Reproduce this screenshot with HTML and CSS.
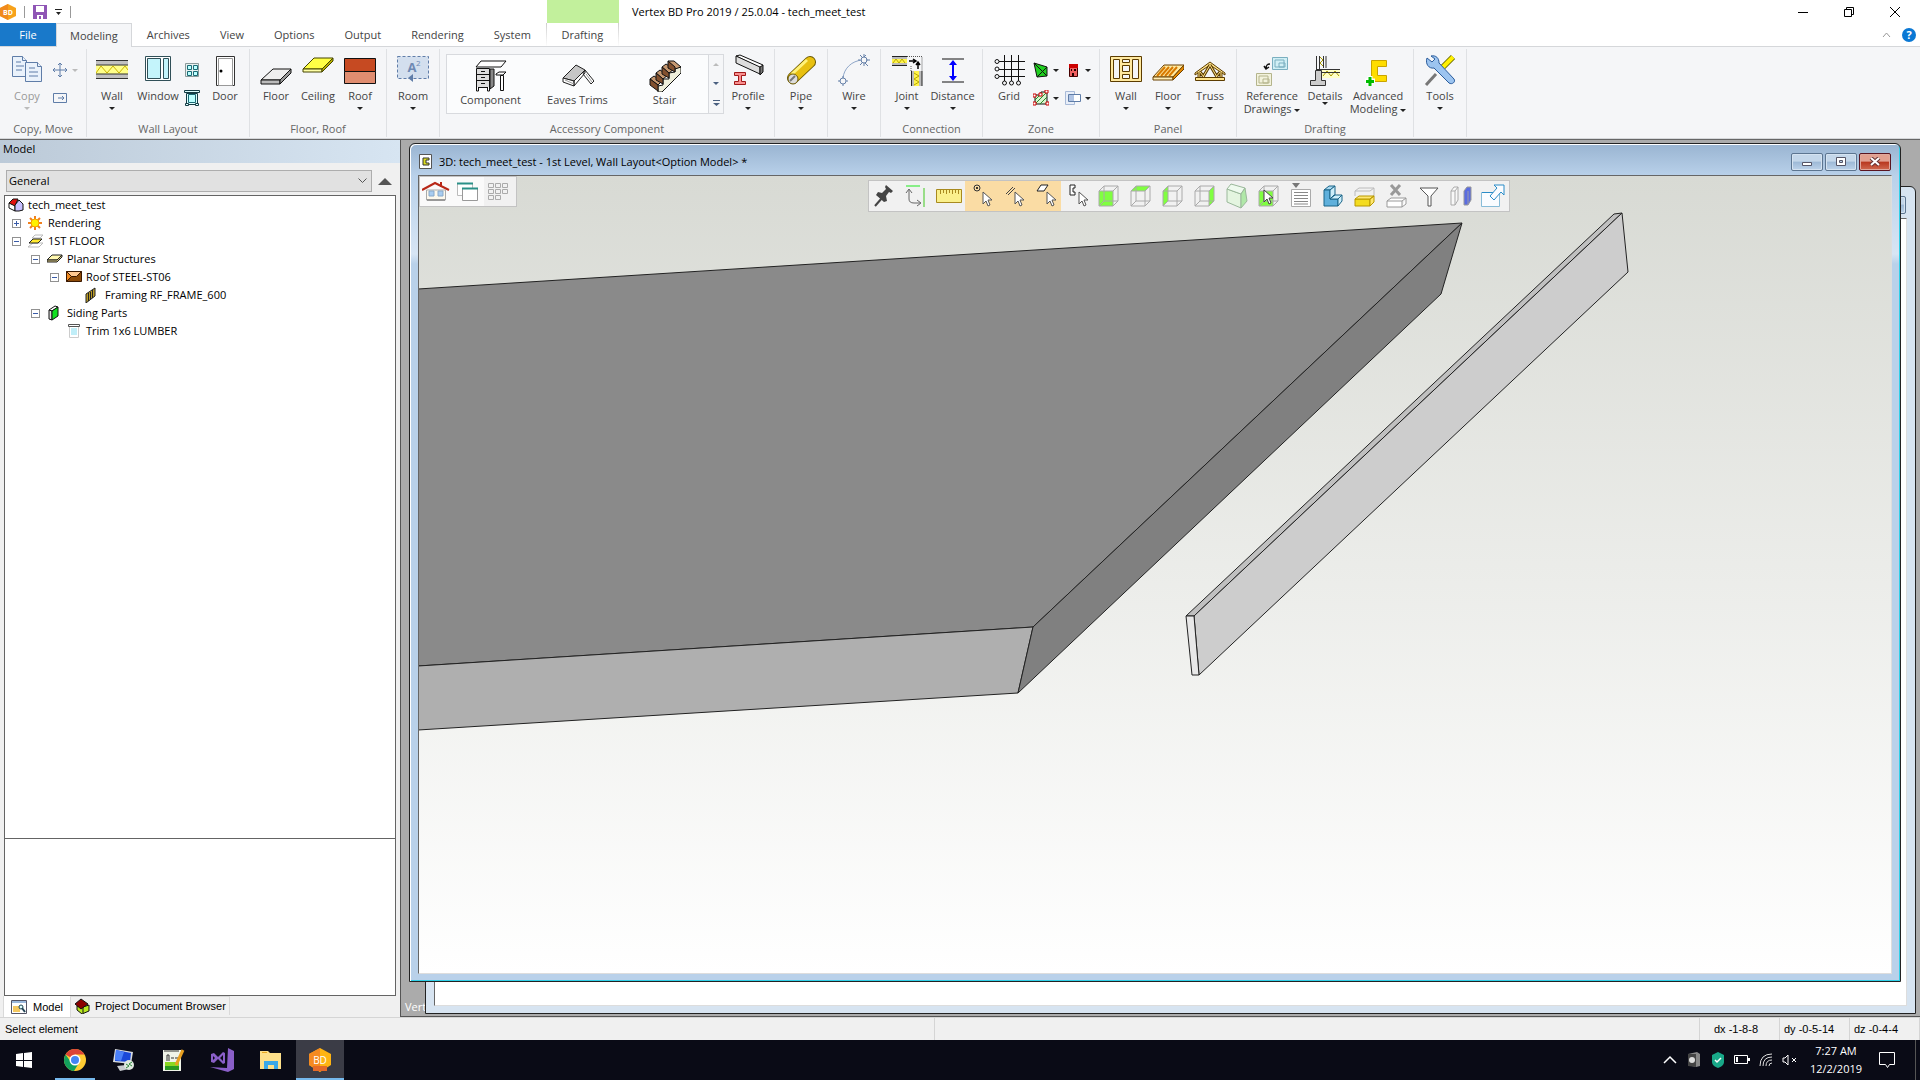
FILE: index.html
```html
<!DOCTYPE html>
<html lang="en">
<head>
    <meta charset="UTF-8">
    <meta name="viewport" content="width=device-width, initial-scale=1.0">
    <title>Vertex BD Pro 2019 / 25.0.04 - tech_meet_test</title>
    <link rel="stylesheet" href="styles.css">
</head>
<body>
    <header class="titlebar">
        <div class="quick-access">
            <svg width="16" height="18" viewBox="0 0 16 18"><path d="M8 1l8 4v8l-8 4-8-4V5z" fill="#f7a21b"/><path d="M0 5l8-4v16l-8-4z" fill="#f08a1d"/><text x="8" y="12" text-anchor="middle" class="logo-small">BD</text></svg>
            <span class="qa-line"></span>
            <button aria-label="Save"><svg width="14" height="14" viewBox="0 0 14 14"><path d="M0 0h14v14H0z" fill="#8f55b5"/><path d="M3 1h8v6H3zM4 10h6v4H4z" fill="#fff"/><path d="M6 11h2v3H6z" fill="#8f55b5"/></svg></button>
            <button aria-label="Customize"><svg width="7" height="6" viewBox="0 0 7 6"><path d="M0 0h7v1H0zM1 3h5L3.500 6z" fill="#222"/></svg></button>
            <span class="qa-line"></span>
        </div>
        <div class="context-tab"></div>
        <h1>Vertex BD Pro 2019 / 25.0.04 - tech_meet_test</h1>
        <div class="app-buttons">
            <button aria-label="Minimize"><svg width="10" height="10"><path d="M0 5.500h10" stroke="#000"/></svg></button>
            <button aria-label="Restore"><svg width="10" height="10" fill="none" stroke="#000"><path d="M.5 2.500h7v7h-7zM2.500 2.500v-2h7v7h-2"/></svg></button>
            <button aria-label="Close"><svg width="10" height="10"><path d="M0 0l10 10M10 0L0 10" stroke="#000"/></svg></button>
        </div>
    </header>

    <nav class="tabs">
        <button class="tab tab-file">File</button>
        <button class="tab tab-active">Modeling</button>
        <button class="tab">Archives</button>
        <button class="tab">View</button>
        <button class="tab">Options</button>
        <button class="tab">Output</button>
        <button class="tab">Rendering</button>
        <button class="tab">System</button>
        <button class="tab tab-context">Drafting</button>
        <div class="tabs-right">
            <button aria-label="Collapse ribbon"><svg width="9" height="6"><path d="M1 5l3.500-4L8 5" fill="none" stroke="#999"/></svg></button>
            <button class="help" aria-label="Help">?</button>
        </div>
    </nav>

    <section class="ribbon">
        <div class="group">
            <div class="group-body">
                <button class="tool tool-44 tool-off">
                    <svg class="icon" viewBox="0 0 32 32" fill="#eaf2fb" stroke="#5f7da8"><path d="M1.500 2.500h10l4 4v16h-14z"/><path d="M11.500 2.500v4h4M5 8h5M5 12h8M5 16h6" /><path d="M14.500 8.500h12l4 4v15h-16z"/><path d="M26.500 8.500v4h4M18 14h6M18 18h9M18 22h9"/></svg>
                    <span>Copy</span><i class="caret"></i>
                </button>
                <div class="small-stack">
                    <button aria-label="Move"><svg width="16" height="16" fill="none" stroke="#5f7da8"><path d="M8 1v14M1 8h14M6 3l2-2 2 2M6 13l2 2 2-2M3 6L1 8l2 2M13 6l2 2-2 2"/></svg><i class="caret caret-off"></i></button>
                    <button aria-label="Stretch"><svg width="16" height="16" fill="none" stroke="#5f7da8"><path d="M9 3.500H1.500v9H9M9 3.500h5.500v9H9M6 8h6M10 6l2 2-2 2"/></svg></button>
                </div>
            </div>
            <h2>Copy, Move</h2>
        </div>

        <div class="group group-tight">
            <div class="group-body">
                <button class="tool tool-46">
                    <svg class="icon" viewBox="0 0 32 32"><path d="M0 7h32v4H0zM0 20h32v4H0z" fill="#c0c0c0"/><path d="M0 11h32v9H0z" fill="#ffff8a"/><path d="M0 6.500h32M0 11h32M0 20h32M0 24.500h32" stroke="#333"/><path d="M0 19l5-7 6 7 6-7 6 7 6-7 3 4" fill="none" stroke="#c9b300"/></svg>
                    <span>Wall</span><i class="caret"></i>
                </button>
                <button class="tool tool-46">
                    <svg class="icon" viewBox="0 0 32 32"><path d="M3.500 2.500h25v24h-25z" fill="#fff" stroke="#305058"/><path d="M5.500 4.500h13v20h-13zM21.500 4.500h5v20h-5z" fill="#c4f4fb" stroke="#305058"/></svg>
                    <span>Window</span>
                </button>
                <div class="small-stack">
                    <button aria-label="Opening"><svg width="16" height="16"><path d="M1.500 1.500h13v13h-13z" fill="#e8f0f0" stroke="#8a9a9a"/><path d="M3.500 3.500h4v4h-4zM9.500 3.500h4v4h-4zM3.500 9.500h4v4h-4zM9.500 9.500h4v4h-4z" fill="#bff" stroke="#1a6a74"/></svg></button>
                    <button aria-label="Window trim"><svg width="16" height="16"><path d="M2.500 3.500h11v11h-11z" fill="#dff" stroke="#143c44"/><path d="M.5.5h15v2H.5zM1.500 13.500h3v2h-3zM11.500 13.500h3v2h-3z" fill="#dff" stroke="#143c44"/><path d="M4.500 4.500h7v8h-7z" fill="#bff" stroke="#1a6a74"/></svg></button>
                </div>
                <button class="tool tool-44">
                    <svg class="icon" viewBox="0 0 32 32"><path d="M7.500 2.500h18v29h-18z" fill="#fff" stroke="#333"/><path d="M9.500 4.500h14v27h-14z" fill="#fff" stroke="#999"/><circle cx="12" cy="17" r="1.500"/></svg>
                    <span>Door</span>
                </button>
            </div>
            <h2>Wall Layout</h2>
        </div>

        <div class="group">
            <div class="group-body">
                <button class="tool">
                    <svg class="icon" viewBox="0 0 32 32" stroke="#111" stroke-linejoin="round"><path d="M1 26l12-11h18L20 26z" fill="#eee"/><path d="M1 26h19v4H1z" fill="#bbb"/><path d="M20 26l11-11v4L20 30z" fill="#999"/></svg>
                    <span>Floor</span>
                </button>
                <button class="tool">
                    <svg class="icon" viewBox="0 0 32 32" stroke="#444400"><path d="M1 15L12 4h19L20 15z" fill="#ffff45"/><path d="M1 15h19v3H1z" fill="#ffffa8"/><path d="M20 15L31 4v3L20 18z" fill="#b8b000"/></svg>
                    <span>Ceiling</span>
                </button>
                <button class="tool">
                    <svg class="icon" viewBox="0 0 32 32" stroke="#111"><path d="M.5 4.500h31v13H.5z" fill="#c64a22"/><path d="M.5 17.500h31v12H.5z" fill="#e08d70"/></svg>
                    <span>Roof</span><i class="caret"></i>
                </button>
            </div>
            <h2>Floor, Roof</h2>
        </div>

        <div class="group">
            <div class="group-body">
                <button class="tool">
                    <svg class="icon" viewBox="0 0 32 32"><path d="M.5 2.500h31v22H.5z" fill="#d3dfee" stroke="#5f7da8" stroke-dasharray="3 2"/><text x="15" y="18" text-anchor="middle" class="room-a">A</text><text x="19" y="12" class="room-2">2</text><path d="M11 24l5-4v8z" fill="#5f7da8"/></svg>
                    <span>Room</span><i class="caret"></i>
                </button>
            </div>
        </div>

        <div class="group">
            <div class="group-body">
                <div class="gallery">
                    <button class="tool tool-87">
                        <svg class="icon" viewBox="0 0 32 32" fill="#fff" stroke="#111"><path d="M1 7l5-6h25l-5 6z"/><path d="M1.500 8.500h13v19h-13z" fill="#ddd"/><path d="M1 14.500h14M1 20.500h14M6 11.500h4M6 17.500h4M6 23.500h4M1.500 27v4h2v-4M12.500 27v4h2v-4"/><path d="M15 9h4v17l-4 3z" fill="#888"/><path d="M21 14l3-2h7l-3 3h-7zM25.500 15.500h3v15h-3z"/></svg>
                        <span>Component</span>
                    </button>
                    <button class="tool tool-87">
                        <svg class="icon" viewBox="0 0 32 32" fill="#fff" stroke="#222"><path d="M1 18L14 5l9 5-11 11z" fill="#c6c6c6"/><path d="M1 18v4l11 4v-5zM12 21v5l11-13v-3zM23 10l9 11-3 3-8-10z"/><path d="M3 20l9 4M24 14l6 8" stroke="#999"/></svg>
                        <span>Eaves Trims</span>
                    </button>
                    <button class="tool tool-87">
                        <svg class="icon" viewBox="0 0 32 32" stroke="#111"><path d="M9 32V26l5-1v-6h6v-6l6-1V8l6-1v6L13 32z" fill="#efefdb"/><path d="M1 19l4-3 8 5-4 4zM7 13l4-3 8 5-5 4zM13 7l4-3 8 5-5 4zM19 1h6l7 6-6 2z" fill="#c69870"/><path d="M1 19l8 6v6l-8-6zM7 13l7 6v5l-7-4zM13 7l7 6v5l-7-4zM19 1l7 6v5l-7-4z" fill="#82502e"/></svg>
                        <span>Stair</span>
                    </button>
                    <div class="gallery-scroll">
                        <button aria-label="Scroll up"><i class="caret caret-up"></i></button>
                        <button aria-label="Scroll down"><i class="caret caret-blue"></i></button>
                        <button aria-label="More"><svg width="7" height="6"><path d="M0 0h7v1H0zM0 3h7L3.500 6z" fill="#4a6080"/></svg></button>
                    </div>
                </div>
                <button class="tool">
                    <svg class="icon" viewBox="0 0 32 32" stroke="#111"><path d="M4 2l4-1 23 10-3 3z" fill="#fff"/><path d="M4 2l24 11v7L4 9z" fill="#ddd"/><path d="M28 13l3-2v7l-3 3z" fill="#777"/><path d="M2.500 18.500h11v3h-4v6h4v3h-11v-3h4v-6h-4z" fill="#f98f8f" stroke="#a01818"/></svg>
                    <span>Profile</span><i class="caret"></i>
                </button>
            </div>
            <h2>Accessory Component</h2>
        </div>

        <div class="group">
            <div class="group-body">
                <button class="tool">
                    <svg class="icon" viewBox="0 0 32 32"><path d="M8 24L25 8" stroke="#6b5800" stroke-width="12" stroke-linecap="round"/><path d="M8 24L25 8" stroke="#e8c010" stroke-width="10" stroke-linecap="round"/><path d="M7 20L22 6" stroke="#fff27a" stroke-width="3"/><circle cx="8" cy="25" r="5" fill="#ddd" stroke="#6b5800"/><path d="M5 27l5-5" stroke="#777" stroke-width="2"/></svg>
                    <span>Pipe</span><i class="caret"></i>
                </button>
            </div>
        </div>

        <div class="group">
            <div class="group-body">
                <button class="tool">
                    <svg class="icon" viewBox="0 0 32 32" fill="none" stroke="#6580a8"><path d="M5 24C6 14 14 7 24 6" stroke="#8ea6c8"/><circle cx="5" cy="27" r="3"/><path d="M0 27h2M8 27h2M5 22v2M5 30v2M22 6h-2M28 6h4M28 1l-2 2M24 9l-2 2M27 9l3 3M22 1l3 3M26 0v3M26 9v3"/><circle cx="26" cy="6" r="3"/></svg>
                    <span>Wire</span><i class="caret"></i>
                </button>
            </div>
        </div>

        <div class="group">
            <div class="group-body">
                <button class="tool">
                    <svg class="icon" viewBox="0 0 32 32"><path d="M1 3h15v8H1zM20 17h11v15H20z" fill="#bbb"/><path d="M1 5h15v4H1zM23 17h5v15h-5z" fill="#fff44c"/><path d="M1 2.500h15M1 11.500h15M20.500 17v15M31 17v15" stroke="#222"/><path d="M2 9l3-4 3 4 3-4 3 4M23 19l5 3-5 3 5 3-5 3" fill="none" stroke="#b8a800"/><path d="M16 2.500h15V17M20 12v5" stroke="#555" fill="none" stroke-dasharray="1 1"/><path d="M18 7h6M22 5l3 2-3 2M27 15V9M25 11l2-3 2 3" fill="none" stroke="#000" stroke-width="1.500"/></svg>
                    <span>Joint</span><i class="caret"></i>
                </button>
                <button class="tool tool-49">
                    <svg class="icon" viewBox="0 0 32 32"><path d="M5 5h22M5 28h22" stroke="#111"/><path d="M16 8v17" stroke="#00f" stroke-width="2"/><path d="M12 11l4-5 4 5zM12 22l4 5 4-5z" fill="#00f"/></svg>
                    <span>Distance</span><i class="caret"></i>
                </button>
            </div>
            <h2>Connection</h2>
        </div>

        <div class="group">
            <div class="group-body">
                <button class="tool">
                    <svg class="icon" viewBox="0 0 32 32" fill="none" stroke="#111"><path d="M6 7.500h26M6 15.500h26M6 22.500h26M11.500 1v26M18.500 1v26M25.500 1v26"/><circle cx="4" cy="7.500" r="2"/><circle cx="4" cy="15" r="2"/><circle cx="4" cy="22.500" r="2"/><circle cx="11.500" cy="29" r="2"/><circle cx="18.500" cy="29" r="2"/><circle cx="25.500" cy="29" r="2"/></svg>
                    <span>Grid</span>
                </button>
                <div class="small-stack">
                    <button aria-label="Zone"><svg width="16" height="16" stroke="#111"><path d="M1 1l13 4v9l-10 1z" fill="#1fd01f"/><path d="M1 1l13 13M4 15l10-10"/></svg><i class="caret"></i></button>
                    <button aria-label="Zone area"><svg width="16" height="16"><path d="M2 5h5l1-3h6v12H2z" fill="#d8f5d0" stroke="#111"/><path d="M2 10l5-5M2 14l12-12M7 14l7-7" stroke="#2a8a2a"/><path d="M0 4h3v3H0zM6 3h3v3H6zM12 0h3v3h-3zM0 12h3v3H0zM13 12h3v3h-3z" fill="#fff" stroke="#c00"/></svg><i class="caret"></i></button>
                </div>
                <div class="small-stack">
                    <button aria-label="House"><svg width="16" height="16"><path d="M4.500 2.500h8v12h-8z" fill="#f06060" stroke="#400"/><path d="M4 2h9v4H4z" fill="#c00"/><path d="M6 7h1v2H6zM9 7h2v2H9zM7 11h2v3H7z" fill="#200"/></svg><i class="caret"></i></button>
                    <button aria-label="Overlap"><svg width="16" height="16"><path d="M.5 1.500h9v13h-9z" fill="#e8eef8" stroke="#a8bad8"/><path d="M3.500 4.500h12v7h-12z" fill="#fff" stroke="#5f7da8"/><path d="M4 5h5v6H4z" fill="#b0c4e4"/></svg><i class="caret"></i></button>
                </div>
            </div>
            <h2>Zone</h2>
        </div>

        <div class="group">
            <div class="group-body">
                <button class="tool">
                    <svg class="icon" viewBox="0 0 32 32" fill="#ffe9a0" stroke="#5c3c00"><path d="M.5 2.500h31v25H.5zM3.500 5.500v19h6v-19zM12.500 5.500v3h7v-3zM12.500 11.500v6h7v-6zM12.500 20.500v4h7v-4zM22.500 5.500v19h6v-19z" fill-rule="evenodd"/></svg>
                    <span>Wall</span><i class="caret"></i>
                </button>
                <button class="tool">
                    <svg class="icon" viewBox="0 0 32 32" stroke="#6a4000"><path d="M1 23L12 11h20L21 23z" fill="#ffe9a0"/><path d="M5 22l8-9M9 22l8-9M13 22l8-9M17 22l8-9" stroke="#d87a00" stroke-width="2"/><path d="M1 23h20v3H1z" fill="#fff0b8"/><path d="M21 23l11-12v4L21 26z" fill="#e88a00"/></svg>
                    <span>Floor</span><i class="caret"></i>
                </button>
                <button class="tool">
                    <svg class="icon" viewBox="0 0 32 32" fill="none"><path d="M1 19L16 8l15 11v2L16 11 1 21zM1.500 23.500h29v3h-29z" fill="#ffe48a" stroke="#5c3c00"/><path d="M16 11L9 23M16 11l7 12M5 18v5M27 18v5M6 18l4 5M26 18l-4 5" stroke="#5c3c00" stroke-width="3"/><path d="M16 11L9 23M16 11l7 12M5 18v5M27 18v5M6 18l4 5M26 18l-4 5" stroke="#ffe48a"/></svg>
                    <span>Truss</span><i class="caret"></i>
                </button>
            </div>
            <h2>Panel</h2>
        </div>

        <div class="group">
            <div class="group-body">
                <button class="tool tool-60">
                    <svg class="icon" viewBox="0 0 32 32"><path d="M16.500 3.500h15v12h-15z" fill="#d0eff5" stroke="#7aafc0"/><path d="M19 6h9v7h-9zM23 9h6v4h-6z" fill="none" stroke="#7aafc0"/><path d="M.5 19.500h15v12H.5z" fill="#f2f2dc" stroke="#b4b48c"/><path d="M3 22h9v7H3zM7 25h6v4H7z" fill="none" stroke="#b4b48c"/><path d="M14 10c-3 0-4 1-4 5M8 12l2 3 3-2" fill="none" stroke="#111" stroke-width="1.500"/></svg>
                    <span>Reference<br>Drawings <i class="caret"></i></span>
                </button>
                <button class="tool tool-46">
                    <svg class="icon" viewBox="0 0 32 32"><path d="M9 16h22v8H13v-5H9z" fill="#ffffc8"/><path d="M14 22l4-5 4 5 4-5 4 5" fill="none" stroke="#a89800"/><path d="M7.500 2v14M10.500 2v14M14.500 2v12M17 2v12M7 15.500h24M13 18.500h18" stroke="#333"/><path d="M11 3l3 3-3 3 3 3" fill="none" stroke="#a89800"/><path d="M6.500 16.500h6v10h4v5H1.500v-5h5z" fill="#ccc" stroke="#333"/></svg>
                    <span>Details</span><i class="caret caret-near"></i>
                </button>
                <button class="tool tool-60">
                    <svg class="icon" viewBox="0 0 32 32"><path d="M9.500 6.500h15v6h-9v9h9v6h-15z" fill="#fd0" stroke="#c9a400"/><path d="M8 22v10M3 27h10" stroke="#fff" stroke-width="5"/><path d="M8 23v9M4 27.500h8" stroke="#0b0" stroke-width="3"/></svg>
                    <span>Advanced<br>Modeling <i class="caret"></i></span>
                </button>
            </div>
            <h2>Drafting</h2>
        </div>

        <div class="group">
            <div class="group-body">
                <button class="tool">
                    <svg class="icon" viewBox="0 0 32 32"><path d="M2 31l10-11" stroke="#777" stroke-width="3"/><path d="M19 13L29 3" stroke="#6a6a00" stroke-width="6"/><path d="M19 13L29 3" stroke="#fff000" stroke-width="4"/><path d="M3 4l5 4 3-3-4-3c5-1 8 2 8 7l15 16c2 3-2 6-5 4L10 14c-5 1-9-4-7-10z" fill="#9cc4f0" stroke="#2a5c9c"/></svg>
                    <span>Tools</span><i class="caret"></i>
                </button>
            </div>
        </div>
    </section>

    <main class="work">
        <aside class="side">
            <div class="side-title">Model</div>
            <div class="side-filter">
                <select aria-label="Filter"><option>General</option></select>
                <button aria-label="Up" class="up"></button>
            </div>
            <div class="tree-box">
                <ul class="tree">
                    <li class="root"><svg width="16" height="16" stroke="#111"><path d="M1 6v5l6 3V8z" fill="#fff"/><path d="M1 6l4-4h5L7 9z" fill="#e01010"/><path d="M7 8l4-5 4 4v6l-4 1H7z" fill="#c8c0ff"/></svg>tech_meet_test</li>
                    <li class="level-1"><button class="expander plus" aria-label="Expand"></button><svg width="16" height="16"><path d="M7 1v14M0 8h14M2 3l10 10M12 3L2 13" stroke="#f08020" stroke-width="2"/><circle cx="7" cy="8" r="4" fill="#fff200" stroke="#f6a000"/></svg>Rendering</li>
                    <li class="level-1"><button class="expander" aria-label="Collapse"></button><svg width="16" height="16"><path d="M0 14l5-4h10l-4 4zM4 5l3-3h8l-3 3z" fill="#fff" stroke="#bbb"/><path d="M1 10l4-4h9l-4 4z" fill="#ffe92e" stroke="#222"/></svg>1ST FLOOR</li>
                    <li class="level-2"><button class="expander" aria-label="Collapse"></button><svg width="16" height="16" stroke="#222"><path d="M0 9l5-5h10l-5 5z" fill="#fff8b0"/><path d="M0 9v2h10l5-5V4l-5 5z" fill="#d8c880"/></svg>Planar Structures</li>
                    <li class="level-3"><button class="expander" aria-label="Collapse"></button><svg width="16" height="16" stroke="#3a1800"><path d="M.5 2.500h15v10H.5z" fill="#8c4a08"/><path d="M.5 2.500h15l-5 5h-5z" fill="#ffc890"/><path d="M.5 2.500l5 5-5 5z" fill="#f08a20"/></svg>Roof STEEL-ST06</li>
                    <li class="level-4"><svg width="16" height="16" stroke="#222"><path d="M1 7l9-6v8l-9 7z" fill="#b89a28"/><path d="M3.500 6v8M5.500 5v8M7.500 3v8"/></svg>Framing RF_FRAME_600</li>
                    <li class="level-2"><button class="expander" aria-label="Collapse"></button><svg width="16" height="16" stroke="#111"><path d="M2 5l6-4 3 1-6 4z" fill="#fff"/><path d="M2 5v9l3 1V6z" fill="#ddd"/><path d="M5 6l6-4v9l-6 4z" fill="#10e020"/></svg>Siding Parts</li>
                    <li class="leaf"><svg width="16" height="16"><path d="M3.500 3.500h9v11h-9z" fill="#fff" stroke="#ccc"/><path d="M5 5h6v7H5z" fill="#c0eef8"/><path d="M2.500 1.500h11v2h-11z" fill="#fff" stroke="#555"/></svg>Trim 1x6 LUMBER</li>
                </ul>
                <div class="tree-info"></div>
            </div>
            <div class="side-tabs">
                <button class="side-tab side-tab-active"><svg width="16" height="14"><path d="M.5.5h15v13H.5z" fill="#fff" stroke="#556"/><path d="M1 1h14v2H1z" fill="#9ab8dc"/><path d="M2 6h7v6H2z" fill="#f4c860"/><circle cx="10" cy="7" r="2" fill="#dff" stroke="#245"/><path d="M11 8l3 4" stroke="#245" stroke-width="2"/></svg>Model</button>
                <button class="side-tab"><svg width="16" height="16" stroke="#111"><path d="M3 8v4l5 4 7-3V7l-6 2z" fill="#b8e820"/><path d="M9 9v6" /><path d="M1 6l6-5 7 5-7 5z" fill="#8c0000"/></svg>Project Document Browser</button>
            </div>
        </aside>

        <section class="mdi">
            <span class="mdi-caption">Vertex</span>
            <div class="window window-back">
                <div class="window-title"><div class="window-buttons"><button aria-label="Close"></button></div></div>
                <div class="window-client"></div>
            </div>
            <div class="window window-front">
                <div class="window-title">
                    <svg width="14" height="15"><path d="M.5.5h12v14H.5z" fill="#fff" stroke="#555"/><path d="M4 4h6v2H7v3h3v2H4z" fill="#dede20" stroke="#333"/></svg>
                    <h3>3D: tech_meet_test - 1st Level, Wall Layout&lt;Option Model&gt; *</h3>
                    <div class="window-buttons">
                        <button aria-label="Minimize"><svg width="12" height="10"><path d="M1.500 5.500h9v3h-9z" fill="#fff" stroke="#556"/></svg></button>
                        <button aria-label="Maximize"><svg width="12" height="10"><path d="M1.500.5h9v8h-9zM4.500 3.500h3v2h-3z" fill="#fff" fill-rule="evenodd" stroke="#556"/></svg></button>
                        <button class="close" aria-label="Close"><svg width="12" height="10"><path d="M2 1l8 7M10 1L2 8" stroke="#633" stroke-width="4"/><path d="M2 1l8 7M10 1L2 8" stroke="#fff" stroke-width="2"/></svg></button>
                    </div>
                </div>
                <div class="window-client">
                    <!-- Roof slab and trim board -->
                    <svg class="scene" viewBox="0 0 1473 797" preserveAspectRatio="xMinYMin slice" stroke="#222" stroke-linejoin="round">
                        <path d="M-1 113L1043 47 614 451-1 490z" fill="#8a8a8a"/>
                        <path d="M-1 490L614 451 599 517-1 554z" fill="#afafaf"/>
                        <path d="M1043 47l-21 71L599 517l15-66z" fill="#808080"/>
                        <path d="M767 440L1195 38l8-1L775 440z" fill="#c0c0c0"/>
                        <path d="M775 440L1203 37l6 59L780 499z" fill="#cdcdcd"/>
                        <path d="M767 440h8l5 59h-7z" fill="#e8e8e8"/>
                    </svg>
                    <div class="view-tools">
                        <button aria-label="Home view"><svg width="28" height="22"><path d="M4.500 9h19v10h-19z" fill="#fdf8ec" stroke="#aaa"/><path d="M5 19h18" stroke="#999" stroke-width="2"/><path d="M0 9L13 2l14 7M19 1v5" fill="none" stroke="#b82818" stroke-width="2"/><path d="M7 10h5v5H7zM16 10h5v5h-5z" fill="#a8ccf0" stroke="#88a8c8"/></svg></button>
                        <button aria-label="Cascade"><svg width="22" height="20"><path d="M.5 1.500h15v12H.5z" fill="#fff" stroke="#bbb"/><path d="M0 1.500h16" stroke="#2a9088" stroke-width="2"/><path d="M5.500 6.500h15v12h-15z" fill="#fff" stroke="#999"/><path d="M5 6.500h16" stroke="#2a9088" stroke-width="2"/></svg></button>
                        <button class="flat" aria-label="Tile"><svg width="26" height="18" fill="none" stroke="#aaa"><path d="M1.500.5h5v4h-5zM8.500.5h5v4h-5zM15.500.5h5v4h-5zM1.500 6.500h5v4h-5zM8.500 6.500h5v4h-5zM15.500 6.500h5v4h-5zM1.500 12.500h5v4h-5zM8.500 12.500h5v4h-5z"/></svg></button>
                    </div>
                    <div class="pick-tools">
                        <button aria-label="Pin"><svg viewBox="0 0 26 26"><path d="M3 23l7-8" stroke="#444" stroke-width="2"/><path d="M14 2l7 6-2 2-2-1-3 4 1 5-3 1-8-7 2-3 4 1 4-4-1-2z" fill="#444"/></svg></button>
                        <button aria-label="Turn view"><svg viewBox="0 0 26 26" fill="none"><path d="M2 3h14" stroke="#8e8" stroke-width="2"/><path d="M20 5v19" stroke="#9d8" stroke-width="2"/><path d="M5 7v9q0 4 5 4h6M2 10l3-4 3 4M13 17l4 3-4 3" stroke="#666"/></svg></button>
                        <button aria-label="Measure"><svg viewBox="0 0 26 26"><path d="M.5 6.500h25v13H.5z" fill="#faf08c" stroke="#a88a20"/><path d="M4.500 7v4M7.500 7v3M10.500 7v4M13.500 7v3M16.500 7v4M19.500 7v3M22.500 7v4" stroke="#a88a20"/></svg></button>
                        <button class="on" aria-label="Pick point"><svg viewBox="-4 0 26 26"><circle cx="5" cy="5" r="3" fill="none" stroke="#333"/><circle cx="5" cy="5" r="1"/><path class="pointer" d="M11 9v12l3-3 2 5 2-1-2-5h4z"/></svg></button>
                        <button class="on" aria-label="Pick edge"><svg viewBox="-4 0 26 26"><path d="M2 11l7-7M4 12l7-7" stroke="#444"/><path class="pointer" d="M11 9v12l3-3 2 5 2-1-2-5h4z"/></svg></button>
                        <button class="on" aria-label="Pick face"><svg viewBox="-4 0 26 26"><path d="M1 8l4-6h7l-4 6z" fill="#fff" stroke="#222"/><path class="pointer" d="M11 9v12l3-3 2 5 2-1-2-5h4z"/></svg></button>
                        <button aria-label="Pick part"><svg viewBox="-4 0 26 26"><path d="M7 2H2v10h5V9H5V5h2z" fill="#fff" stroke="#222"/><path class="pointer" d="M11 9v12l3-3 2 5 2-1-2-5h4z"/></svg></button>
                        <button aria-label="Front face"><svg class="cube" viewBox="0 0 26 26"><path d="M3 8h14v15H3z" class="face"/><path d="M3 8h14v15H3zM3 8l5-5h14l-5 5M22 3v15l-5 5M8 3v15h14M3 23l5-5"/></svg></button>
                        <button aria-label="Top face"><svg class="cube" viewBox="0 0 26 26"><path d="M3 8l5-5h14l-5 5z" class="face"/><path d="M3 8h14v15H3zM3 8l5-5h14l-5 5M22 3v15l-5 5M8 3v15h14M3 23l5-5"/></svg></button>
                        <button aria-label="Left face"><svg class="cube" viewBox="0 0 26 26"><path d="M3 8l5-5v15l-5 5z" class="face"/><path d="M3 8h14v15H3zM3 8l5-5h14l-5 5M22 3v15l-5 5M8 3v15h14M3 23l5-5"/></svg></button>
                        <button aria-label="Right face"><svg class="cube" viewBox="0 0 26 26"><path d="M22 3v15l-5 5V8z" class="face"/><path d="M3 8h14v15H3zM3 8l5-5h14l-5 5M22 3v15l-5 5M8 3v15h14M3 23l5-5"/></svg></button>
                        <button aria-label="Isometric"><svg viewBox="0 0 26 26" stroke="#9ab89a"><path d="M3 6l14 5v14L3 19z" fill="#e4f5e0"/><path d="M3 6l4-5 14 4-4 6z" fill="#eefaee"/><path d="M17 11l4-6 2 13-6 7z" fill="#b0e8a8"/></svg></button>
                        <button aria-label="Pick plane"><svg class="cube" viewBox="0 0 26 26"><path d="M3 8h14v15H3z" class="face"/><path d="M3 8h14v15H3zM3 8l5-5h14l-5 5M22 3v15l-5 5M8 3v15h14M3 23l5-5"/><path class="pointer" d="M8 7v12l3-3 2 5 2-1-2-5h4z"/></svg></button>
                        <button aria-label="List"><svg viewBox="0 0 26 26"><path d="M4 0h8L8 5z" fill="#777"/><path d="M3.500 6.500h19v17h-19z" fill="#fff" stroke="#aaa"/><path d="M6 9.500h14M6 12.500h14M6 15.500h14M6 18.500h14M6 21h14" stroke="#888"/></svg></button>
                        <button aria-label="Part"><svg viewBox="0 0 26 26" stroke="#1a6488"><path d="M4 7l5-4h6l-5 4z" fill="#a8d8f0"/><path d="M4 7h6v9h8v7H4z" fill="#5fb0dc"/><path d="M10 16l4-4h8l-4 4zM10 7l5-4v9l-5 4zM18 16l4-4v6l-4 5z" fill="#cdeefa"/></svg></button>
                        <button aria-label="Section"><svg viewBox="0 0 26 26"><path d="M3 13V8l4-3h15v8l-4 3M3 8h15l4-3" fill="none" stroke="#bbb"/><path d="M3 16h15v7H3z" fill="#f4dc20" stroke="#b89800"/><path d="M3 16l4-3h15l-4 3zM18 16l4-3v6l-4 4z" fill="#ffe870" stroke="#b89800"/></svg></button>
                        <button aria-label="Hide"><svg viewBox="0 0 26 26"><path d="M7 2l9 10M16 2L7 12" stroke="#999" stroke-width="3"/><path d="M3 18h15v6H3zM3 18l4-3h15l-4 3M22 15v6l-4 3" fill="#fff" stroke="#999"/></svg></button>
                        <button aria-label="Filter"><svg viewBox="0 0 26 26"><path d="M4 5h18l-7 8v10h-3V13z" fill="#fff" stroke="#555"/></svg></button>
                        <button aria-label="Compare"><svg viewBox="0 0 26 26"><path d="M3 8l3-4h4v13l-3 5H3zM3 8h4v14M7 8l3-4" fill="#f8f8f8" stroke="#aaa"/><path d="M16 8l3-4h4v13l-3 5h-4z" fill="#5a6ce0" stroke="#999"/><path d="M20 8v14" stroke="#99a"/></svg></button>
                        <button aria-label="Pop out"><svg viewBox="0 0 26 26" fill="#fafcff" stroke="#2a8cc8"><path d="M1.500 9.500h18v14h-18z" stroke="#88bcd8"/><path d="M2 9.500h18"/><path d="M14 2h10v10l-3-3-7 8-4-4 7-8z"/></svg></button>
                    </div>
                </div>
            </div>
        </section>
    </main>

    <footer class="status">
        <span class="status-main">Select element</span>
        <span class="status-blank"></span>
        <span class="status-dx">dx -1-8-8</span>
        <span class="status-dy">dy -0-5-14</span>
        <span class="status-dz">dz -0-4-4</span>
    </footer>

    <div class="taskbar">
        <button class="task start" aria-label="Start"><svg width="16" height="16" fill="#fff"><path d="M0 2l7-1v7H0zM8 1l8-1v8H8zM0 9h7v6l-7-1zM8 9h8v7l-8-1z"/></svg></button>
        <button class="task running" aria-label="Chrome"><svg width="24" height="24"><circle cx="12" cy="12" r="11" fill="#fc3"/><path d="M12 12L2.500 6.500A11 11 0 0 1 21.500 6.500H12z" fill="#dc4437"/><path d="M2.500 6.500A11 11 0 0 0 11 23l5.500-9H8z" fill="#12a05c"/><circle cx="12" cy="12" r="5.500" fill="#fff"/><circle cx="12" cy="12" r="4" fill="#4485f4"/></svg></button>
        <button class="task" aria-label="Remote Desktop"><svg width="24" height="24"><path d="M3 1l18 3-2 12L1 14z" fill="#d8dce0"/><path d="M4 2l15 3-1 9-15-1z" fill="#1a48d8"/><path d="M4 2l8 2-3 9-6-1z" fill="#4a80f8"/><path d="M5 18l9-1 3 4-9 2z" fill="#c8ccd0"/><circle cx="17" cy="17" r="5" fill="#e0e8e0"/><path d="M14 16l3 2-3 2M20 14l-3 2 3 2" fill="none" stroke="#2a8a3a"/></svg></button>
        <button class="task" aria-label="Notepad++"><svg width="24" height="24"><path d="M2 2h18v21H2z" fill="#f0f4e8"/><path d="M4 14h14v8H4z" fill="#8ad820"/><path d="M4 18h14v4H4z" fill="#2a9a20"/><path d="M6 13V7h2v6M10 10h3M14 10h3M3 3h15" stroke="#333" fill="none"/><path d="M22 2l-7 15" stroke="#e8a020" stroke-width="3"/></svg></button>
        <button class="task" aria-label="Visual Studio"><svg width="24" height="24" fill="#8a5fc8"><path d="M18 0l6 3v18l-6 3-18-5 17 1z"/><path d="M1 6l3-1 4 4 5-5 2 1v10l-2 1-5-5-4 4-3-1zM3 8v4l2-2zM13 7l-3 3 3 3z" fill-rule="evenodd"/></svg></button>
        <button class="task" aria-label="File Explorer"><svg width="24" height="24"><path d="M1 3h8l2 2h11v16H1z" fill="#fde08a"/><path d="M3 4h5v1H3z" fill="#e8a820"/><path d="M5 21v-8h14v8h-4v-4H9v4z" fill="#3aa8e8"/></svg></button>
        <button class="task running active" aria-label="Vertex BD"><svg width="26" height="26"><path d="M13 1l11 6v11l-11 7-11-7V7z" fill="#ffb412"/><path d="M2 7l11-6v24L2 18z" fill="#f58a20"/><path d="M6 19h14v5H6z" fill="#e46a28"/><text x="13" y="17" text-anchor="middle" class="logo-big">BD</text></svg></button>
        <div class="tray">
            <button aria-label="Hidden icons"><svg width="14" height="10"><path d="M1 8l6-6 6 6" fill="none" stroke="#fff" stroke-width="1.500"/></svg></button>
            <button aria-label="Device"><svg width="14" height="16"><path d="M1 2l9-2 3 2v12l-4 1-8-2z" fill="#888"/><path d="M1 2h8v13l-8-1z" fill="#444"/><circle cx="5" cy="8" r="3" fill="#ddd"/></svg></button>
            <button aria-label="Security"><svg width="14" height="16"><path d="M7 0l6 3v7c0 3-3 5-6 6-3-1-6-3-6-6V3z" fill="#18a888"/><path d="M4 8l2 2 4-4" fill="none" stroke="#fff" stroke-width="1.500"/></svg></button>
            <button aria-label="Battery"><svg width="16" height="10"><path d="M.5.500h13v8H.5z" fill="none" stroke="#fff"/><path d="M2 2h2v5H2zM14 3h2v3h-2z" fill="#fff"/></svg></button>
            <button aria-label="Network"><svg width="14" height="14" fill="none" stroke="#ddd"><path d="M1 13Q1 1 13 1M4 13Q4 4 13 4M7 13q0-6 6-6M10 13q0-3 3-3"/></svg></button>
            <button aria-label="Volume"><svg width="16" height="12" fill="none" stroke="#fff"><path d="M1 4h2l3-3v10L3 8H1zM10 4l4 4M14 4l-4 4"/></svg></button>
            <time class="clock">7:27 AM<br>12/2/2019</time>
            <button class="notify" aria-label="Notifications"><svg width="16" height="16"><path d="M.5.500h15v12h-5l-2 3-2-3h-6z" fill="none" stroke="#fff"/></svg></button>
            <button class="show-desktop" aria-label="Show desktop"></button>
        </div>
    </div>
</body>
</html>
```
FILE: styles.css
```css
/* General Styles */
* {
    box-sizing: border-box;
}

body {
    display: flex;
    flex-direction: column;
    height: 100vh;
    margin: 0;
    overflow: hidden;
    font-family: "Open Sans", "Noto Sans", sans-serif;
    font-size: 11px;
    line-height: 16px;
    color: #000;
    background: #f0f0f0;
}

button {
    display: flex;
    align-items: center;
    justify-content: center;
    margin: 0;
    padding: 0;
    border: none;
    background: none;
    font: inherit;
    color: inherit;
}

h1, h2, h3, ul {
    margin: 0;
    padding: 0;
    font-size: inherit;
    font-weight: normal;
    list-style: none;
}

svg {
    display: block;
    flex: none;
}

/* Title bar */
.titlebar {
    display: flex;
    align-items: center;
    height: 23px;
    background: #fff;
}

.quick-access {
    display: flex;
    align-items: center;
    gap: 8px;
    width: 547px;
}

.qa-line {
    width: 1px;
    height: 12px;
    background: #999;
}

.logo-small {
    font: bold 7px "Open Sans", sans-serif;
    fill: #fff;
}

.context-tab {
    width: 72px;
    height: 23px;
    background: #c2f09c;
}

.titlebar h1 {
    flex: 1;
    padding-left: 13px;
}

.app-buttons {
    display: flex;
    padding-right: 2px;
}

.app-buttons button {
    width: 46px;
    height: 20px;
}

/* Ribbon tabs */
.tabs {
    display: flex;
    height: 24px;
    background: #fff;
    border-bottom: 1px solid #d5d7da;
}

.tab {
    padding: 0 15px;
    color: #444;
}

.tab-file {
    width: 56px;
    background: #1979ca;
    color: #fff;
}

.tab-active {
    height: 24px;
    padding: 0 13px;
    border: 1px solid #d5d7da;
    border-bottom: none;
    background: #f5f6f8;
}

.tab-context {
    width: 73px;
    border: solid #d5d7da;
    border-width: 0 1px;
    border-image: linear-gradient(#ccc, #fff) 1;
}

.tabs-right {
    display: flex;
    align-items: center;
    gap: 11px;
    margin-left: auto;
    padding-right: 4px;
}

.help {
    width: 14px;
    height: 14px;
    border-radius: 50%;
    background: #0a78d4;
    color: #fff;
    font-weight: bold;
}

/* Ribbon */
.ribbon {
    display: flex;
    height: 92px;
    padding-top: 2px;
    background: #f5f6f8;
    border-bottom: 1px solid #d5d7da;
    color: #444;
}

.group {
    display: flex;
    flex-direction: column;
    justify-content: space-between;
    height: 88px;
    padding: 5px 5px 0;
    border-right: 1px solid #dfe1e4;
}

.group-tight {
    padding: 5px 2px 0;
}

.group h2 {
    text-align: center;
    color: #666;
}

.group-body {
    display: flex;
}

.tool {
    flex-direction: column;
    justify-content: flex-start;
    width: 42px;
    height: 62px;
    white-space: nowrap;
    line-height: 13px;
}

.tool span {
    margin-top: 3px;
}

.tool-off {
    color: #999;
}

.tool-44 { width: 44px; }
.tool-46 { width: 46px; }
.tool-49 { width: 49px; }
.tool-60 { width: 60px; }
.tool-87 { width: 87px; }

.icon {
    width: 32px;
    height: 32px;
}

.room-a {
    font: bold 13px "Open Sans", sans-serif;
    fill: #6f8ab4;
}

.room-2 {
    font: 8px "Open Sans", sans-serif;
    fill: #6f8ab4;
}

.caret {
    display: inline-block;
    margin-top: 5px;
    border: solid transparent;
    border-width: 3px 3px 0;
    border-top-color: #222;
}

.tool span .caret {
    vertical-align: middle;
    margin: 0;
}

.tool-off .caret,
.caret-off {
    border-top-color: #bbb;
}

.caret-near {
    margin-top: 0;
}

.caret-up {
    margin: 0;
    border-width: 0 3px 3px;
    border-bottom-color: #bbb;
}

.caret-blue {
    border-top-color: #4a6080;
    margin: 0;
}

.small-stack {
    display: flex;
    flex-direction: column;
    align-items: flex-start;
    gap: 12px;
    padding-top: 8px;
}

.small-stack button {
    gap: 4px;
    padding: 0 3px;
    height: 16px;
}

.small-stack .caret {
    margin: 0;
}

.gallery {
    display: flex;
    height: 60px;
    margin: 0 3px 0 1px;
    border: 1px solid #d8dade;
    background: #fbfcfd;
}

.gallery .tool {
    height: 58px;
    padding-top: 5px;
}

.gallery .tool span {
    margin-top: 1px;
}

.gallery-scroll {
    display: flex;
    flex-direction: column;
    width: 15px;
    border-left: 1px solid #d8dade;
    background: #f5f6f8;
}

.gallery-scroll button {
    flex: 1;
}

/* Work area */
.work {
    display: flex;
    flex: 1;
    min-height: 0;
    border-top: 1px solid #666;
}

.side {
    display: flex;
    flex-direction: column;
    width: 400px;
    background: #f0f0f0;
}

.side-title {
    height: 23px;
    padding: 2px 3px;
    background: linear-gradient(90deg, #bccad8, #d7e5f2);
    line-height: 14px;
}

.side-filter {
    display: flex;
    align-items: center;
    gap: 6px;
    padding: 7px 8px 3px 6px;
}

.side-filter select {
    flex: 1;
    height: 22px;
    padding: 0 2px;
    border: 1px solid #adadad;
    border-radius: 0;
    appearance: none;
    font: inherit;
    color: #000;
    background: #e1e1e1 url("data:image/svg+xml,%3Csvg xmlns='http://www.w3.org/2000/svg' width='9' height='6'%3E%3Cpath d='M.5.5l4 4 4-4' fill='none' stroke='%23555'/%3E%3C/svg%3E") no-repeat right 4px center;
}

.up {
    border: solid transparent;
    border-width: 0 7px 7px;
    border-bottom-color: #555;
}

.tree-box {
    display: flex;
    flex: 1;
    flex-direction: column;
    margin: 0 4px;
    border: 1px solid #646464;
    background: #fff;
}

.tree {
    flex: 1;
}

.tree li {
    display: flex;
    align-items: center;
    gap: 4px;
    height: 18px;
}

.tree .root { padding-left: 3px; }
.tree .level-1 { padding-left: 7px; }
.tree .level-2 { padding-left: 26px; }
.tree .level-3 { padding-left: 45px; }
.tree .leaf { padding-left: 61px; }
.tree .level-4 { padding-left: 80px; }

.expander {
    width: 9px;
    height: 9px;
    margin-right: 3px;
    border: 1px solid #919191;
    background: linear-gradient(#3a5ca8, #3a5ca8) center / 5px 1px no-repeat, #fff;
}

.expander.plus {
    background: linear-gradient(#3a5ca8, #3a5ca8) center / 5px 1px no-repeat, linear-gradient(#3a5ca8, #3a5ca8) center / 1px 5px no-repeat, #fff;
}

.tree-info {
    height: 157px;
    border-top: 1px solid #646464;
}

.side-tabs {
    display: flex;
    align-items: flex-start;
    height: 21px;
    padding-left: 3px;
    font-family: "Liberation Sans", Arial, sans-serif;
}

.side-tab {
    gap: 5px;
    height: 19px;
    padding: 0 3px;
    border: 1px solid #d9d9d9;
    border-width: 1px 1px 0 0;
}

.side-tab-active {
    height: 21px;
    gap: 6px;
    padding: 0 7px;
    border-width: 0 1px;
    background: #fff;
}

/* Document windows */
.mdi {
    position: relative;
    flex: 1;
    border-left: 1px solid #555;
    border-bottom: 1px solid #555;
    background: #ababab;
}

.mdi-caption {
    position: absolute;
    left: 4px;
    bottom: 1px;
    color: #fff;
}

.window {
    position: absolute;
    display: flex;
    flex-direction: column;
    padding: 0 8px 7px;
    border: 1px solid #222;
    border-radius: 6px 6px 0 0;
}

.window-back {
    inset: 46px 4px 2px 24px;
    background: #d7e4f1;
}

.window-front {
    inset: 3px 19px 34px 8px;
    background: linear-gradient(#99b4d1, #b9d1ea 32px, #d7e5f4 110px, #b9d1ea 120px);
    box-shadow: inset 1px 1px #fff, inset -1px -1px #30d0e8;
}

.window-title {
    display: flex;
    align-items: center;
    gap: 6px;
    height: 31px;
    padding: 4px 1px 0;
}

.window-title h3 {
    flex: 1;
}

.window-buttons {
    display: flex;
    gap: 2px;
    margin-left: auto;
}

.window-buttons button {
    width: 32px;
    height: 18px;
    border: 1px solid #5c7590;
    border-radius: 2px;
    background: linear-gradient(#c4d7ea 45%, #9db9d6 50%, #bdd3ea);
    box-shadow: inset 0 0 0 1px #d5e3f1;
}

.window-buttons .close {
    border-color: #5a1420;
    background: linear-gradient(#e2a090 45%, #b8371e 50%, #d06a50);
    box-shadow: inset 0 0 0 1px #e0a89c;
}

.window-client {
    position: relative;
    flex: 1;
    min-height: 0;
    border: 1px solid #666;
    border-right-color: #ddd;
    border-bottom-color: #ddd;
    background: #fff;
}

.window-front .window-client {
    background: linear-gradient(#d8dad4, #fff);
}

.scene {
    width: 100%;
    height: 100%;
}

.view-tools,
.pick-tools {
    position: absolute;
    display: flex;
    border: 1px solid #c3c3c3;
    background: #f1f1f1;
}

.view-tools {
    top: 0;
    left: 0;
    height: 31px;
}

.view-tools button {
    width: 32px;
    background: #fafafa;
}

.view-tools .flat {
    background: #f1f1f1;
}

.pick-tools {
    top: 4px;
    right: 381px;
    height: 32px;
}

.pick-tools button {
    width: 32px;
}

.pick-tools svg {
    width: 26px;
    height: 26px;
}

.pick-tools .on {
    background: #fadca4;
}

.pointer {
    fill: #fff;
    stroke: #555;
}

.cube {
    fill: none;
    stroke: #aaa;
}

.cube .face {
    fill: #80ff40;
    stroke: none;
}

.cube .pointer {
    fill: #fff;
    stroke: #444;
}

/* Status bar */
.status {
    display: flex;
    height: 23px;
    border-top: 1px solid #d5d5d5;
    background: #f0f0f0;
    font-family: "Liberation Sans", Arial, sans-serif;
    line-height: 22px;
}

.status span {
    border-right: 1px solid #d5d5d5;
}

.status-main {
    width: 935px;
    padding-left: 5px;
}

.status-blank {
    flex: 1;
}

.status-dx { width: 80px; padding-left: 14px; }
.status-dy { width: 70px; padding-left: 4px; }
.status-dz { width: 70px; padding-left: 4px; }

/* Taskbar */
.taskbar {
    display: flex;
    gap: 1px;
    height: 40px;
    background: #0a0b16;
    color: #fff;
}

.task {
    width: 48px;
    height: 40px;
}

.start {
    margin-right: 2px;
}

.running {
    background: linear-gradient(#76b9ed, #76b9ed) center bottom / 40px 2px no-repeat;
}

.active {
    background: linear-gradient(#76b9ed, #76b9ed) center bottom / 48px 2px no-repeat, #3b3c46;
}

.logo-big {
    font: 10px "Open Sans", sans-serif;
    fill: #fff;
}

.tray {
    display: flex;
    align-items: center;
    margin-left: auto;
}

.tray button {
    width: 24px;
    height: 40px;
}

.clock {
    width: 68px;
    text-align: center;
    line-height: 18px;
}

.tray .notify {
    width: 34px;
    margin-right: 11px;
}

.tray .show-desktop {
    width: 5px;
    border-left: 1px solid #555;
}
```
